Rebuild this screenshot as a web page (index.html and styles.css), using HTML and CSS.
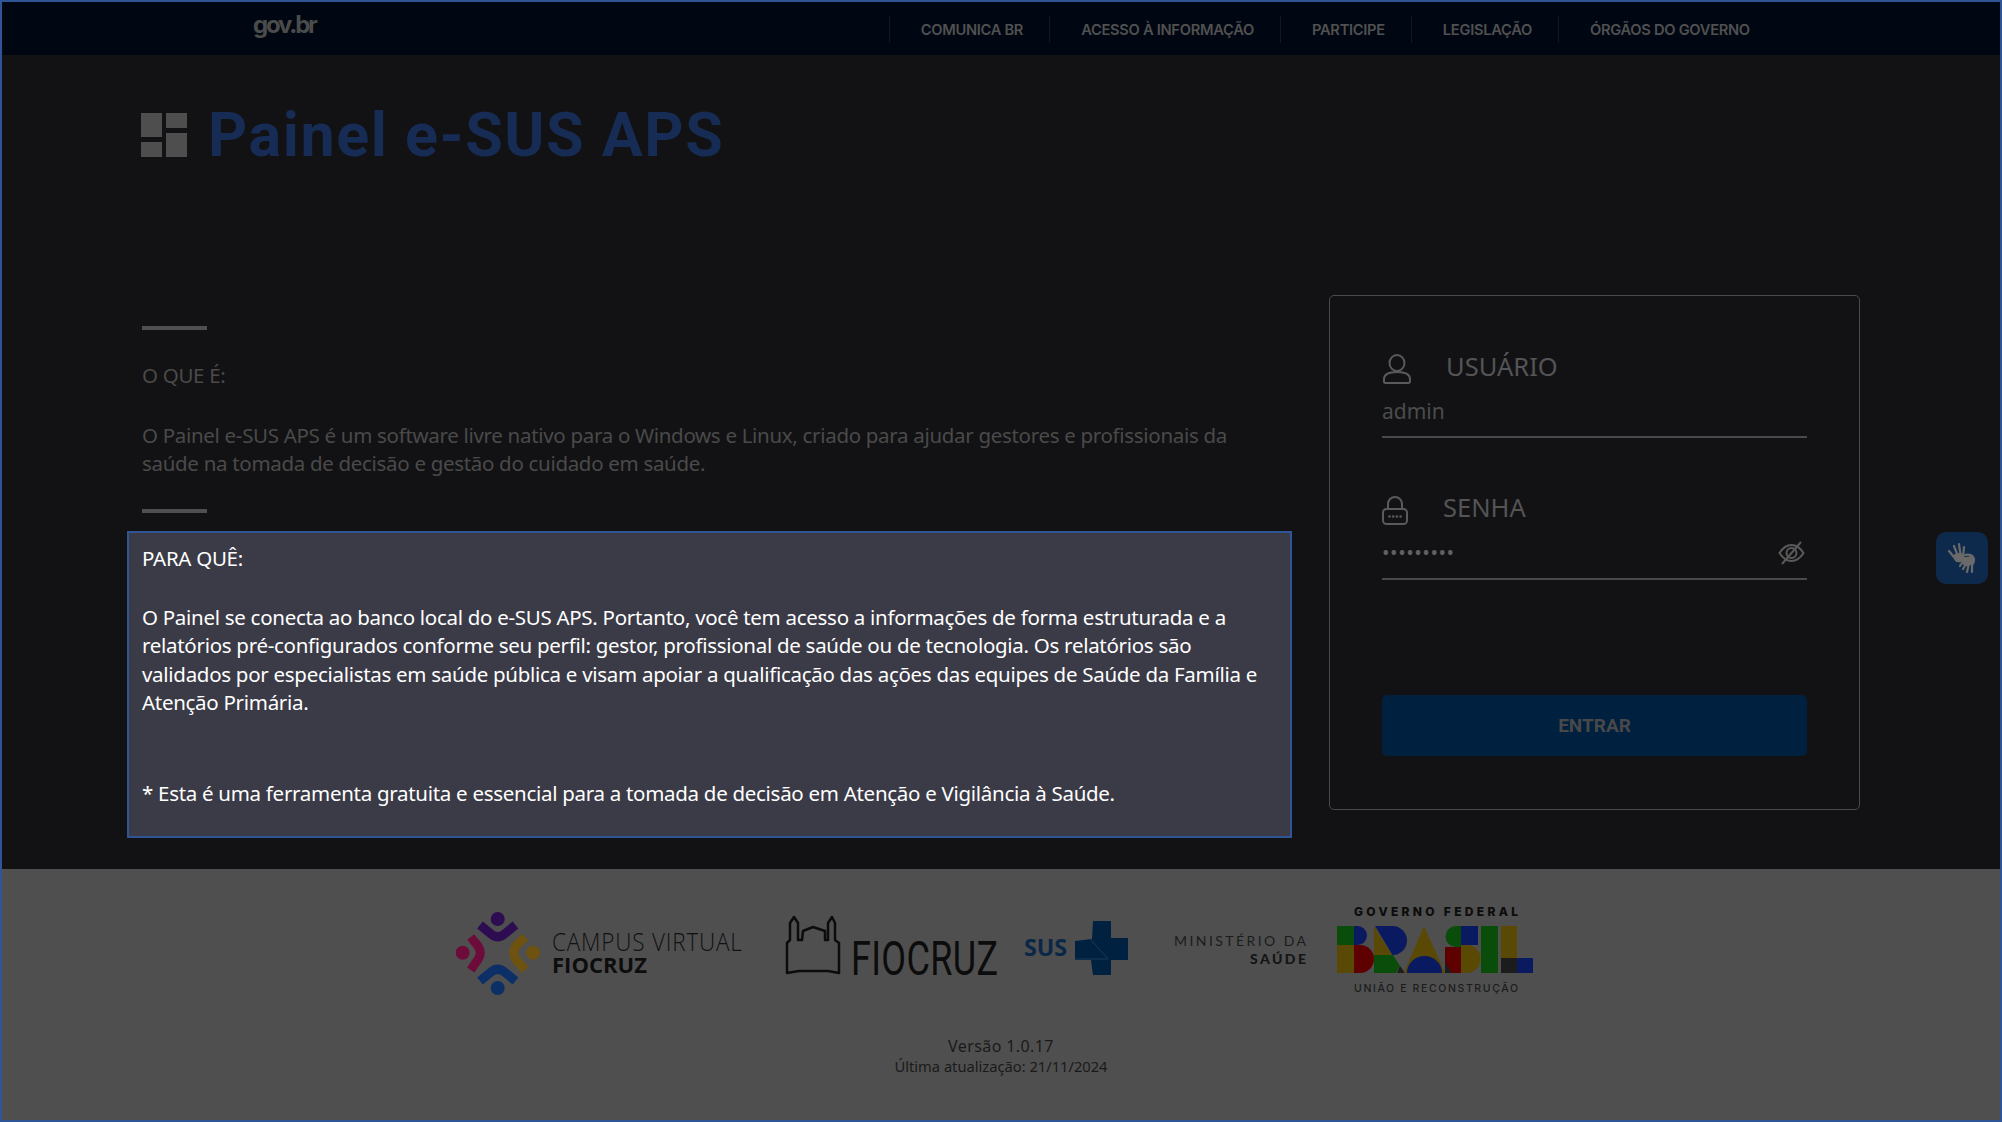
FILE: index.html
```html
<!DOCTYPE html>
<html lang="pt-BR">
<head>
<meta charset="utf-8">
<title>Painel e-SUS APS</title>
<link rel="stylesheet" href="styles.css">
</head>
<body>
<div class="page">
  <header class="topbar">
    <span class="govbr">gov.br</span>
    <nav class="nav">
      <a class="nav-item">COMUNICA BR</a>
      <a class="nav-item">ACESSO À INFORMAÇÃO</a>
      <a class="nav-item">PARTICIPE</a>
      <a class="nav-item">LEGISLAÇÃO</a>
      <a class="nav-item">ÓRGÃOS DO GOVERNO</a>
    </nav>
  </header>

  <main class="main">
    <h1 class="title">
      <svg class="title-icon" viewBox="0 0 46 44" aria-hidden="true">
        <rect x="0" y="0" width="21" height="24"/>
        <rect x="25" y="0" width="21" height="15"/>
        <rect x="25" y="20" width="21" height="24"/>
        <rect x="0" y="29" width="21" height="15"/>
      </svg>
      <span>Painel e-SUS APS</span>
    </h1>

    <div class="columns">
      <section class="info">
        <div class="rule rule-first"></div>
        <p class="dim heading">O QUE É:</p>
        <p class="dim text">O Painel e-SUS APS é um software livre nativo para o Windows e Linux, criado para ajudar gestores e profissionais da saúde na tomada de decisão e gestão do cuidado em saúde.</p>
        <div class="rule rule-second"></div>
        <div class="highlight">
          <p>PARA QUÊ:</p>
          <p class="hl-body">O Painel se conecta ao banco local do e-SUS APS. Portanto, você tem acesso a informações de forma estruturada e a relatórios pré-configurados conforme seu perfil: gestor, profissional de saúde ou de tecnologia. Os relatórios são validados por especialistas em saúde pública e visam apoiar a qualificação das ações das equipes de Saúde da Família e Atenção Primária.</p>
          <p class="hl-note">* Esta é uma ferramenta gratuita e essencial para a tomada de decisão em Atenção e Vigilância à Saúde.</p>
        </div>
      </section>

      <form class="card">
        <div class="field-label label-user">
          <svg class="icon-user" viewBox="0 0 30 30" aria-hidden="true">
            <ellipse cx="15" cy="9" rx="7.5" ry="8"/>
            <path d="M2 25c0-5 5-7 13-7s13 2 13 7v2.500a1.500 1.500 0 0 1-1.500 1.500h-23a1.500 1.500 0 0 1-1.500-1.500z"/>
          </svg>
          <span class="label-text">USUÁRIO</span>
        </div>
        <div class="field-value">admin</div>

        <div class="field-label label-pass">
          <svg class="icon-lock" viewBox="0 0 26 29" aria-hidden="true">
            <path d="M6 13V8a7 7 0 0 1 14 0v5"/>
            <rect x="1" y="13" width="24" height="15" rx="3.500"/>
            <circle class="dot" cx="7.500" cy="20.500" r="1.300"/>
            <circle class="dot" cx="11.200" cy="20.500" r="1.300"/>
            <circle class="dot" cx="14.900" cy="20.500" r="1.300"/>
            <circle class="dot" cx="18.600" cy="20.500" r="1.300"/>
          </svg>
          <span class="label-text">SENHA</span>
        </div>
        <div class="field-value field-pass">
          <span class="pw-dots">•••••••••</span>
          <svg class="icon-eye" viewBox="0 0 27 24" aria-hidden="true">
            <path d="M1.500 12C5 6.500 9 4 13.500 4S22 6.500 25.500 12C22 17.500 18 20 13.500 20S5 17.500 1.500 12z"/>
            <circle cx="13.500" cy="12" r="5"/>
            <path d="M23 1L4 23"/>
          </svg>
        </div>

        <button class="submit" type="button">ENTRAR</button>
      </form>
    </div>
  </main>

  <footer class="footer">
    <div class="logos">
      <svg class="logo logo-campus" viewBox="456 905 286 96" aria-label="Campus Virtual Fiocruz">
        <circle cx="497.700" cy="919" r="7" fill="#2d0c52"/>
        <path d="M480 925L491 934Q497.700 939.500 504.500 934L515.500 925" class="ch" stroke="#2d0c52"/>
        <circle cx="462.700" cy="952.700" r="7" fill="#6d0b3a"/>
        <path d="M470.700 937L478 946Q482.500 952.700 478 959.500L470.700 970" class="ch" stroke="#6d0b3a"/>
        <circle cx="533" cy="952.700" r="7" fill="#6e5210"/>
        <path d="M525 937L516 946Q511.500 952.700 516 959.500L525 970" class="ch" stroke="#6e5210"/>
        <circle cx="497.700" cy="988" r="7" fill="#0b2f66"/>
        <path d="M480 981L491 972Q497.700 966.500 504.500 972L515.500 981" class="ch" stroke="#0b2f66"/>
        <text transform="translate(552 951) scale(.9 1)" class="campus-a" textLength="211">CAMPUS VIRTUAL</text>
        <text x="552" y="973" class="campus-b" textLength="95">FIOCRUZ</text>
      </svg>
      <svg class="logo logo-fiocruz" viewBox="785 905 213 96" aria-label="Fiocruz">
        <path class="bld" d="M787 973V943L790 940V923L794 917L798 923V940H802L803 931L813 927L825 931V940H828V923L832 917L835 923V940L839 943V973L828 971H799Z"/>
        <text transform="translate(851 975) scale(.75 1)" class="fio" textLength="196">FIOCRUZ</text>
      </svg>
      <svg class="logo logo-sus" viewBox="1024 905 104 96" aria-label="SUS">
        <text x="1024" y="956" class="sus" textLength="43" lengthAdjust="spacingAndGlyphs">SUS</text>
        <path fill="#00213f" d="M1093 921H1111V938H1128V960H1111V975H1093L1091 960H1075V941L1092 939Z"/>
        <path d="M1091 940L1108 959" stroke="#1a3b5c" stroke-width="1" fill="none"/>
        <path d="M1075 959H1108" stroke="#1a3b5c" stroke-width="1" fill="none"/>
      </svg>
      <svg class="logo logo-min" viewBox="1174 905 132 96" aria-label="Ministério da Saúde">
        <text x="1174" y="946" class="min-a" textLength="132">MINISTÉRIO DA</text>
        <text x="1250" y="964" class="min-b" textLength="56">SAÚDE</text>
      </svg>
      <svg class="logo logo-gov" viewBox="1337 905 196 96" aria-label="Governo Federal Brasil União e Reconstrução">
        <text x="1354" y="916" class="gov-a" textLength="164">GOVERNO FEDERAL</text>
        <rect x="1337" y="926" width="17" height="19" fill="#0a4d0a"/>
        <path d="M1354 926H1357.500A9.500 9.500 0 0 1 1357.500 945H1354Z" fill="#0a1a60"/>
        <rect x="1337" y="945" width="17" height="28" fill="#5a4905"/>
        <path d="M1354 945H1360A14 14 0 0 1 1360 973H1354Z" fill="#5e0000"/>
        <path d="M1374 926L1392 955H1374Z" fill="#5a4905"/>
        <path d="M1375 926H1392.500A14.500 14.500 0 0 1 1392.500 955Z" fill="#0a1a60"/>
        <path d="M1374 955H1393L1400 966L1396 973H1374Z" fill="#0a4d0a"/>
        <path d="M1397 973L1400 966L1405 973Z" fill="#1c1c1c"/>
        <path d="M1424 926L1445 973H1404Z" fill="#5a4905"/>
        <path d="M1407 973A17.500 17 0 0 1 1442 973Z" fill="#0a1a60"/>
        <path d="M1461 926H1456A10.500 10.500 0 0 0 1456 947H1461Z" fill="#0a4d0a"/>
        <rect x="1461" y="926" width="17" height="19" fill="#0a1a60"/>
        <rect x="1445" y="947" width="16" height="26" fill="#5e0000"/>
        <path d="M1445 973V962L1452 973Z" fill="#1c1c1c"/>
        <path d="M1461 945H1466.500A14 14 0 0 1 1466.500 973H1461Z" fill="#5a4905"/>
        <rect x="1481" y="926" width="17" height="47" fill="#0a4d0a"/>
        <rect x="1501" y="926" width="16" height="32" fill="#5a4905"/>
        <rect x="1501" y="958" width="16" height="15" fill="#1c1c1c"/>
        <rect x="1517" y="958" width="16" height="15" fill="#0a1a60"/>
        <text x="1354" y="992" class="gov-b" textLength="164">UNIÃO E RECONSTRUÇÃO</text>
      </svg>
    </div>
    <p class="version">Versão 1.0.17</p>
    <p class="updated">Última atualização: 21/11/2024</p>
  </footer>

  <div class="vlibras" aria-label="VLibras">
    <svg viewBox="0 0 34 34" aria-hidden="true">
      <g class="hand">
        <path d="M12 20L4 10M14 18L9 5M16 17L14 3M18 17L19 6"/>
        <path d="M9 14L16 12L20 18L15 21L11 20Z" class="palm"/>
      </g>
      <g class="hand">
        <path d="M20 14C24 13 28 14 29 18C29 21 28 23 27 24M18 18C21 16 25 17 26 20"/>
        <path d="M15 25L19 19M18 28L22 21M22 31L24 22M27 31L27 22"/>
        <path d="M17 18L27 15L29 22L22 25L18 23Z" class="palm"/>
      </g>
    </svg>
  </div>
</div>
</body>
</html>
```

FILE: styles.css
```css
* { box-sizing: border-box; }
html, body { margin: 0; padding: 0; }
body { font-family: "Noto Sans", "Open Sans", sans-serif; background: #121214; }
p { margin: 0; }

.page {
  position: relative;
  width: 2002px;
  height: 1122px;
  border: 2px solid #2f5597;
  display: flex;
  flex-direction: column;
  overflow: hidden;
}

/* top bar */
.topbar {
  height: 53px;
  flex: none;
  background: #000712;
  display: flex;
  align-items: flex-start;
  padding-left: 251px;
}
.govbr {
  font-family: Inter, sans-serif;
  font-weight: 700;
  font-size: 24px;
  line-height: 28px;
  margin-top: 9px;
  letter-spacing: -2.2px;
  color: #4b4b4b;
}
.nav { display: flex; margin-left: 573px; margin-top: 14px; }
.nav-item {
  font-family: Inter, sans-serif;
  font-weight: 600;
  font-size: 14.700px;
  line-height: 25px;
  letter-spacing: -0.3px;
  color: #505050;
  padding: 2px 26px 0 31px;
  border-left: 1px solid #14171d;
  white-space: nowrap;
}

/* main */
.main { flex: 1; min-height: 0; padding-left: 125px; background: #121214; }
.title {
  margin: 45px 0 125px 14px;
  height: 70px;
  display: flex;
  align-items: center;
  font-family: Roboto, sans-serif;
  font-weight: 700;
  font-size: 61px;
  line-height: 70px;
  letter-spacing: 1.550px;
  color: #162c54;
}
.title-icon { width: 46px; height: 44px; margin-right: 21px; fill: #4e4e4e; }

.columns { display: flex; align-items: flex-start; gap: 37px; }
.info { width: 1165px; }
.rule { width: 65px; height: 4px; background: #4f4f4f; margin-left: 15px; }
.rule-first { margin-top: 31px; }
.dim { color: #4a4a4a; margin-left: 15px; font-size: 20.500px; line-height: 28.100px; letter-spacing: -0.310px; }
.heading { margin-top: 31px; }
.text { margin-top: 32px; width: 1130px; }
.rule-second { margin-top: 32px; }

.highlight {
  margin-top: 18px;
  height: 307px;
  background: #3b3b47;
  border: 2px solid #2f5597;
  padding: 11px 12px 0 13px;
  color: #ffffff;
  font-size: 20.500px;
  line-height: 28.100px;
  letter-spacing: -0.290px;
}
.hl-body { margin-top: 31px; }
.hl-note { margin-top: 63px; }

/* login card */
.card {
  width: 531px;
  height: 514.500px;
  border: 1.500px solid #4a4a4a;
  border-radius: 5px;
  padding: 58px 52px 0;
}
.field-label {
  display: flex;
  align-items: center;
  height: 30px;
  font-size: 25.500px;
  color: #545454;
}
.label-text { margin-top: -6px; }
.icon-user { width: 30px; height: 30px; margin-right: 34px; }
.icon-lock { width: 26px; height: 29px; margin-right: 35px; }
.icon-user, .icon-lock, .icon-eye { fill: none; stroke: #5a5a5a; stroke-width: 2; }
.icon-lock .dot { fill: #5a5a5a; stroke: none; }
.label-pass { margin-top: 57px; }
.field-value {
  margin-top: 13px;
  height: 41px;
  border-bottom: 2px solid #4a4a4a;
  font-size: 21px;
  line-height: 28px;
  color: #4c4c4c;
}
.field-pass { display: flex; justify-content: space-between; margin-top: 14px; height: 41px; }
.pw-dots { font-size: 20px; letter-spacing: 0.550px; line-height: 28px; color: #606060; }
.icon-eye { width: 27px; height: 24px; margin: 2px 2px 0 0; }
.submit {
  display: block;
  width: 425px;
  height: 61px;
  margin-top: 115px;
  border: 0;
  border-radius: 5px;
  background: #00203f;
  font-family: Roboto, sans-serif;
  font-weight: 700;
  font-size: 19px;
  color: #484848;
}

/* footer */
.footer { flex: none; height: 251px; background: #4f4f4f; text-align: center; color: #1a1a1a; }
.logos { display: flex; height: 96px; margin: 36px 0 0 454px; }
.logo { height: 96px; flex: none; }
.logo-campus { width: 286px; margin-right: 43px; }
.logo-fiocruz { width: 213px; margin-right: 26px; }
.logo-sus { width: 104px; margin-right: 46px; }
.logo-min { width: 132px; margin-right: 31px; }
.logo-gov { width: 196px; }
.ch { fill: none; stroke-width: 9; }
.campus-a { font-family: "Open Sans", sans-serif; font-weight: 300; font-size: 25px; fill: #111; }
.campus-b { font-family: "Open Sans", sans-serif; font-weight: 700; font-size: 22px; fill: #0d0d0d; }
.bld { fill: none; stroke: #0c0c0c; stroke-width: 2.500; stroke-linejoin: round; }
.fio { font-family: Roboto, sans-serif; font-weight: 400; font-size: 48px; fill: #0c0c0c; }
.sus { font-family: "Open Sans", sans-serif; font-weight: 700; font-size: 24px; fill: #0a2747; }
.min-a { font-family: Lato, sans-serif; font-size: 14px; fill: #1c1c1c; }
.min-b { font-family: Lato, sans-serif; font-weight: 900; font-size: 14px; fill: #141414; }
.gov-a { font-family: Inter, sans-serif; font-weight: 800; font-size: 12px; fill: #0c0c0c; }
.gov-b { font-family: Inter, sans-serif; font-weight: 500; font-size: 10.500px; fill: #1c1c1c; }
.version { margin-top: 34px; font-size: 16px; line-height: 22px; letter-spacing: 0.400px; }
.updated { font-size: 14.700px; line-height: 18px; }

/* floating accessibility widget */
.vlibras {
  position: absolute;
  right: 12px;
  top: 530px;
  width: 52px;
  height: 52px;
  background: #0d2a4d;
  border-radius: 10px;
  display: flex;
  align-items: center;
  justify-content: center;
}
.vlibras svg { width: 34px; height: 34px; }
.hand path { fill: none; stroke: #6a6a6a; stroke-width: 2.200; stroke-linecap: round; }
.hand .palm { fill: #6a6a6a; stroke-width: 1; }
```
